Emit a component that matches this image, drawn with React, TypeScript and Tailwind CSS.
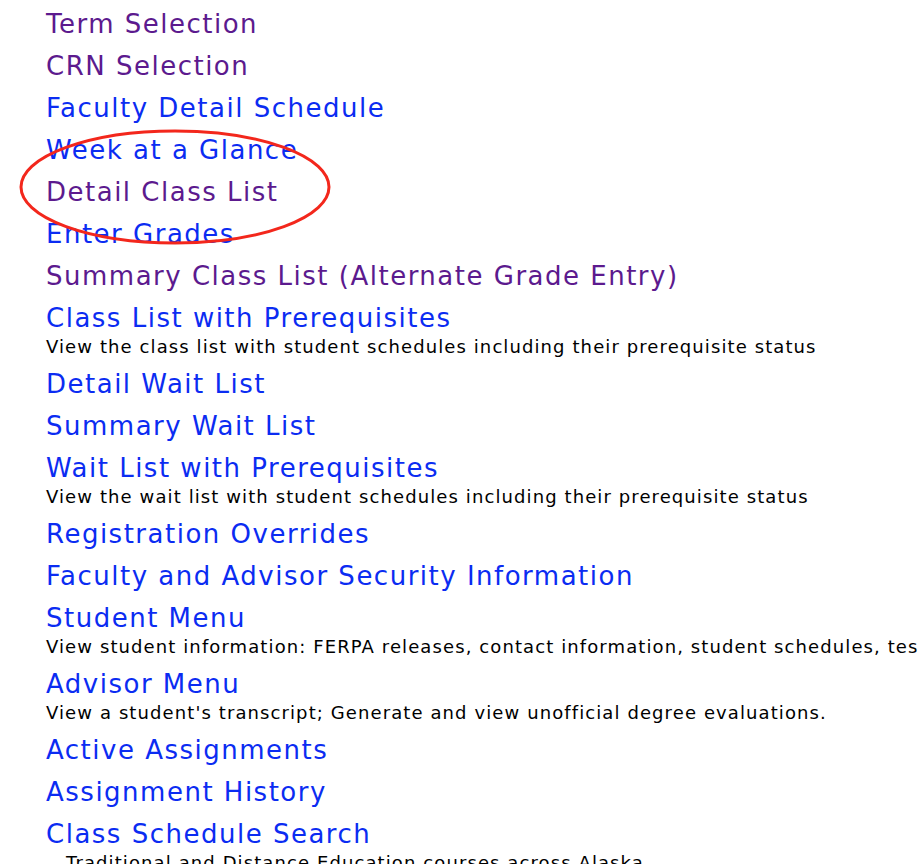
import React from 'react';

type Item = {
  label: string;
  visited?: boolean;
  desc?: string;
  indent?: boolean;
};

const items: Item[] = [
  { label: 'Term Selection', visited: true },
  { label: 'CRN Selection', visited: true },
  { label: 'Faculty Detail Schedule' },
  { label: 'Week at a Glance' },
  { label: 'Detail Class List', visited: true },
  { label: 'Enter Grades' },
  { label: 'Summary Class List (Alternate Grade Entry)', visited: true },
  {
    label: 'Class List with Prerequisites',
    desc: 'View the class list with student schedules including their prerequisite status',
  },
  { label: 'Detail Wait List' },
  { label: 'Summary Wait List' },
  {
    label: 'Wait List with Prerequisites',
    desc: 'View the wait list with student schedules including their prerequisite status',
  },
  { label: 'Registration Overrides' },
  { label: 'Faculty and Advisor Security Information' },
  {
    label: 'Student Menu',
    desc: 'View student information: FERPA releases, contact information, student schedules, test scores, holds',
  },
  {
    label: 'Advisor Menu',
    desc: "View a student's transcript; Generate and view unofficial degree evaluations.",
  },
  { label: 'Active Assignments' },
  { label: 'Assignment History' },
  {
    label: 'Class Schedule Search',
    desc: 'Traditional and Distance Education courses across Alaska',
    indent: true,
  },
];

const App: React.FC = () => {
  return (
    <div className="relative w-[918px] h-[864px] overflow-hidden bg-white font-['DejaVu_Sans',Verdana,sans-serif]">
      <div className="flex flex-col pl-[46px] pt-[3px]">
        {items.map((it) => (
          <div key={it.label} className="flex flex-col">
            <a
              href="#"
              className={`block h-[42px] leading-[42px] text-[26px] tracking-[1.5px] whitespace-nowrap ${
                it.visited ? 'text-[#5c1a8e]' : 'text-[#0b2cf2]'
              }`}
            >
              {it.label}
            </a>
            {it.desc && (
              <div
                className={`-mt-[4px] mb-[4px] h-[24px] leading-[24px] text-[18px] tracking-[1.1px] text-black whitespace-nowrap ${
                  it.indent ? 'pl-[20px]' : ''
                }`}
              >
                {it.desc}
              </div>
            )}
          </div>
        ))}
      </div>

      {/* red annotation circle */}
      <svg
        className="absolute left-0 top-0 pointer-events-none"
        width="918"
        height="864"
        viewBox="0 0 918 864"
      >
        <ellipse cx="175" cy="187" rx="154" ry="56" fill="none" stroke="#f3271c" strokeWidth="3" />
      </svg>
    </div>
  );
};

export default App;
